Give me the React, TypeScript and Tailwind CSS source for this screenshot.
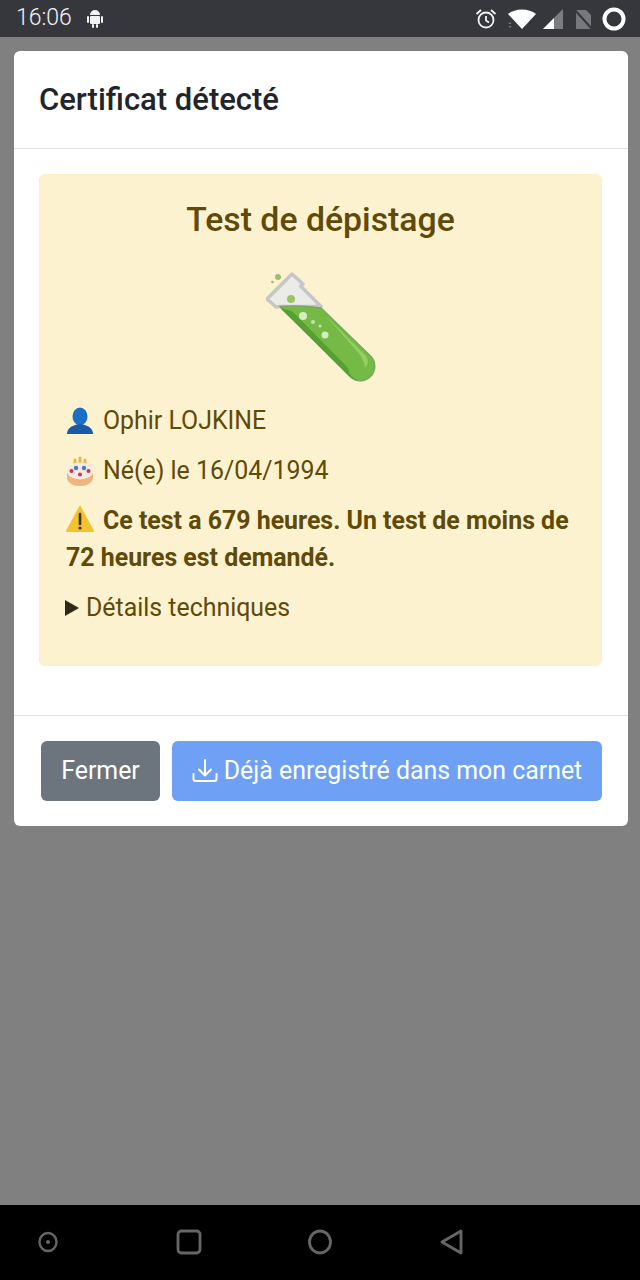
function TestTube() {
  return (
    <svg width="110" height="110" viewBox="0 0 110 110" className="block">
      {/* glass */}
      <path d="M26 2 L37 12 L34.500 14 L55 34.500 L14 34.500 L10 35 L1 27 Z" fill="#ebebe8" stroke="#c5c6c8" strokeWidth="3.500" strokeLinejoin="round" />
      {/* liquid */}
      <path d="M14 34.500 Q34 33 55 36 L104.750 84.250 A14.500 14.500 0 0 1 84.250 104.750 Z" fill="#74ba45" stroke="#78a862" strokeWidth="1.500" />
      <path d="M14 36 L84.250 104.750 A14.500 14.500 0 0 0 92 108 A15 15 0 0 1 82 96 L26 39 Z" fill="#56a033" />
      <path d="M60 44 L100 84 A9 9 0 0 1 99 96 A30 30 0 0 0 90 78 Z" fill="#98cf64" />
      <circle cx="12" cy="5" r="3" fill="#9dbd6b" />
      <circle cx="6.500" cy="10" r="1.300" fill="#9dbd6b" />
      <circle cx="25" cy="27" r="4" fill="#9cc464" />
      <circle cx="37" cy="44" r="4" fill="#d6ecc2" />
      <circle cx="47" cy="50" r="2" fill="#c4e4a8" />
      <circle cx="54" cy="54" r="1.500" fill="#c4e4a8" />
      <circle cx="59" cy="63" r="3.500" fill="#d6ecc2" />
    </svg>
  );
}

function PersonIcon() {
  return (
    <svg width="28" height="28" viewBox="0 0 28 28" className="shrink-0">
      <ellipse cx="14" cy="9.500" rx="7.500" ry="9" fill="#1c6fc6" />
      <path d="M1 27 C1 21.500 6 18.500 11 17.500 H17 C22 18.500 27 21.500 27 27 Z" fill="#1a5ba8" />
    </svg>
  );
}

function CakeIcon() {
  return (
    <svg width="28" height="30" viewBox="0 0 28 30" className="shrink-0">
      <path d="M9 4 v7 M14 2 v8 M19 4 v7" stroke="#e8b840" strokeWidth="3" strokeLinecap="round" />
      <path d="M1 15 V21 C1 27 7 30 14 30 C21 30 27 27 27 21 V15 Z" fill="#eeb57c" />
      <ellipse cx="14" cy="15" rx="13" ry="8.500" fill="#f6e9e2" />
      <circle cx="5.500" cy="15" r="2" fill="#c23b4e" />
      <circle cx="22.500" cy="15" r="2" fill="#c23b4e" />
      <circle cx="10" cy="12" r="2.200" fill="#4a7cc0" />
      <circle cx="18" cy="12" r="2.200" fill="#4a7cc0" />
      <circle cx="14" cy="18.500" r="2" fill="#c23b4e" />
    </svg>
  );
}

function WarningIcon() {
  return (
    <svg width="28" height="28" viewBox="0 0 28 28" className="shrink-0">
      <path d="M14 2 L27 26 H1 Z" fill="#f2c230" stroke="#f2c230" strokeWidth="2" strokeLinejoin="round" />
      <path d="M14 9 V19" stroke="#3a3420" strokeWidth="2.600" strokeLinecap="round" />
      <circle cx="14" cy="23" r="1.600" fill="#3a3420" />
    </svg>
  );
}

function StatusBar() {
  return (
    <div className="h-[37px] shrink-0 bg-[#36373c] flex items-center pl-[16px] pr-[14px]">
      <span className="text-[23px] font-light text-[#f2f2f2]">16:06</span>
      <svg width="16" height="20" viewBox="0 0 16 20" className="ml-[15px]" fill="#f2f2f2">
        <path d="M3 6 a5 5 0 0 1 10 0 Z" />
        <rect x="3" y="7" width="10" height="8" rx="1" />
        <rect x="0" y="7" width="2" height="7" rx="1" />
        <rect x="14" y="7" width="2" height="7" rx="1" />
        <rect x="5" y="15" width="2" height="4" rx="1" />
        <rect x="9" y="15" width="2" height="4" rx="1" />
      </svg>
      <div className="ml-auto flex items-center">
        <svg width="24" height="24" viewBox="0 0 24 24" fill="none" stroke="#f2f2f2" strokeWidth="1.800">
          <circle cx="12" cy="13" r="7.500" />
          <path d="M12 9 V13.500 L15 15.500" />
          <path d="M2.500 7 L7 3 M21.500 7 L17 3" />
        </svg>
        <svg width="34" height="24" viewBox="0 0 34 24" className="ml-[7px]" fill="#ffffff">
          <path d="M3 7 C10 1 24 1 31 7 L17 22 Z" />
          <path d="M3.500 17 L5 15 L6.500 17 Z M3.500 19 L5 21 L6.500 19 Z" fill="#77787b" />
        </svg>
        <svg width="22" height="22" viewBox="0 0 22 22" className="ml-[3px]">
          <path d="M1 21 L21 1 V21 Z" fill="#7c7d80" />
          <path d="M1 21 L12 10 V21 Z" fill="#ffffff" />
        </svg>
        <svg width="20" height="22" viewBox="0 0 20 22" className="ml-[9px]">
          <path d="M3 2 H13 L18 7 V21 H3 Z" fill="#77787b" />
          <path d="M1 1 L19 21" stroke="#36373c" strokeWidth="2" />
        </svg>
        <svg width="24" height="24" viewBox="0 0 24 24" className="ml-[9px]" fill="none">
          <circle cx="12" cy="12" r="9.500" stroke="#ffffff" strokeWidth="4" />
        </svg>
      </div>
    </div>
  );
}

function NavBar() {
  return (
    <div className="h-[75px] shrink-0 bg-black flex items-center pl-[37px] pb-[1px]">
      <svg width="22" height="26" viewBox="0 0 22 26" fill="none" stroke="#666666" strokeWidth="2.400">
        <ellipse cx="11" cy="13" rx="8.500" ry="9" />
        <circle cx="11" cy="13" r="2" fill="#666666" stroke="none" />
      </svg>
      <svg width="26" height="26" viewBox="0 0 26 26" className="ml-[117px]" fill="none" stroke="#666666" strokeWidth="2.800">
        <rect x="2" y="2" width="22" height="22" rx="3.500" />
      </svg>
      <svg width="26" height="26" viewBox="0 0 26 26" className="ml-[105px]" fill="none" stroke="#666666" strokeWidth="2.800">
        <ellipse cx="13" cy="13" rx="10.500" ry="11" />
      </svg>
      <svg width="26" height="26" viewBox="0 0 26 26" className="ml-[106px]" fill="none" stroke="#666666" strokeWidth="2.800" strokeLinejoin="round">
        <path d="M22 2 V24 L3 13 Z" />
      </svg>
    </div>
  );
}

export default function App() {
  return (
    <div className="w-[640px] h-[1280px] flex flex-col font-['Roboto',sans-serif] overflow-hidden">
      <StatusBar />
      <div className="flex-1 bg-[#808080] pt-[14px] pl-[14px] pr-[12px]">
        <div className="bg-white rounded-[6px] h-[775px] flex flex-col">
          <div className="h-[98px] shrink-0 border-b border-[#dee2e6] flex items-center px-[25px] pt-[2px]">
            <h1 className="text-[31px] font-medium text-[#212529]">Certificat détecté</h1>
          </div>
          <div className="h-[567px] shrink-0 border-b border-[#dee2e6] pt-[25px] pl-[25px] pr-[26px]">
            <div className="h-[492px] bg-[#fcf2cf] border border-[#fcefc8] rounded-[6px] text-[#5f4a08] px-[26px] pt-[20px]">
              <h2 className="text-center text-[33.8px] leading-[50px] font-medium">Test de dépistage</h2>
              <div className="flex justify-center mt-[27px]">
                <TestTube />
              </div>
              <div className="mt-[20px] text-[24.9px] leading-[37px]">
                <p className="flex items-center gap-[9px]"><PersonIcon />Ophir LOJKINE</p>
                <p className="flex items-center gap-[9px] mt-[13px]"><CakeIcon />Né(e) le 16/04/1994</p>
                <p className="mt-[13px] font-bold">
                  <span className="inline-flex align-[-4px] mr-[9px]"><WarningIcon /></span>
                  Ce test a 679 heures. Un test de moins de 72 heures est demandé.
                </p>
                <p className="flex items-center mt-[13px] -ml-[1px]">
                  <span className="w-0 h-0 mr-[7px] border-y-[8px] border-y-transparent border-l-[14px] border-l-[#2f2a14]"></span>
                  Détails techniques
                </p>
              </div>
            </div>
          </div>
          <div className="flex-1 flex items-center gap-[12px] pl-[27px]">
            <button className="w-[119px] h-[60px] rounded-[6px] bg-[#6c757d] text-white text-[24.9px]">Fermer</button>
            <button className="w-[430px] h-[60px] rounded-[6px] bg-[#6ea1f5] text-white text-[24.9px] flex items-center justify-center gap-[6px]">
              <svg width="26" height="26" viewBox="0 0 26 26" fill="none" stroke="#ffffff" strokeWidth="2" strokeLinecap="round" strokeLinejoin="round">
                <path d="M1.500 16 V21 a2 2 0 0 0 2 2 H22.500 a2 2 0 0 0 2 -2 V16" />
                <path d="M13 2 V17 M7 11.500 L13 17.500 L19 11.500" />
              </svg>
              Déjà enregistré dans mon carnet
            </button>
          </div>
        </div>
      </div>
      <NavBar />
    </div>
  );
}
